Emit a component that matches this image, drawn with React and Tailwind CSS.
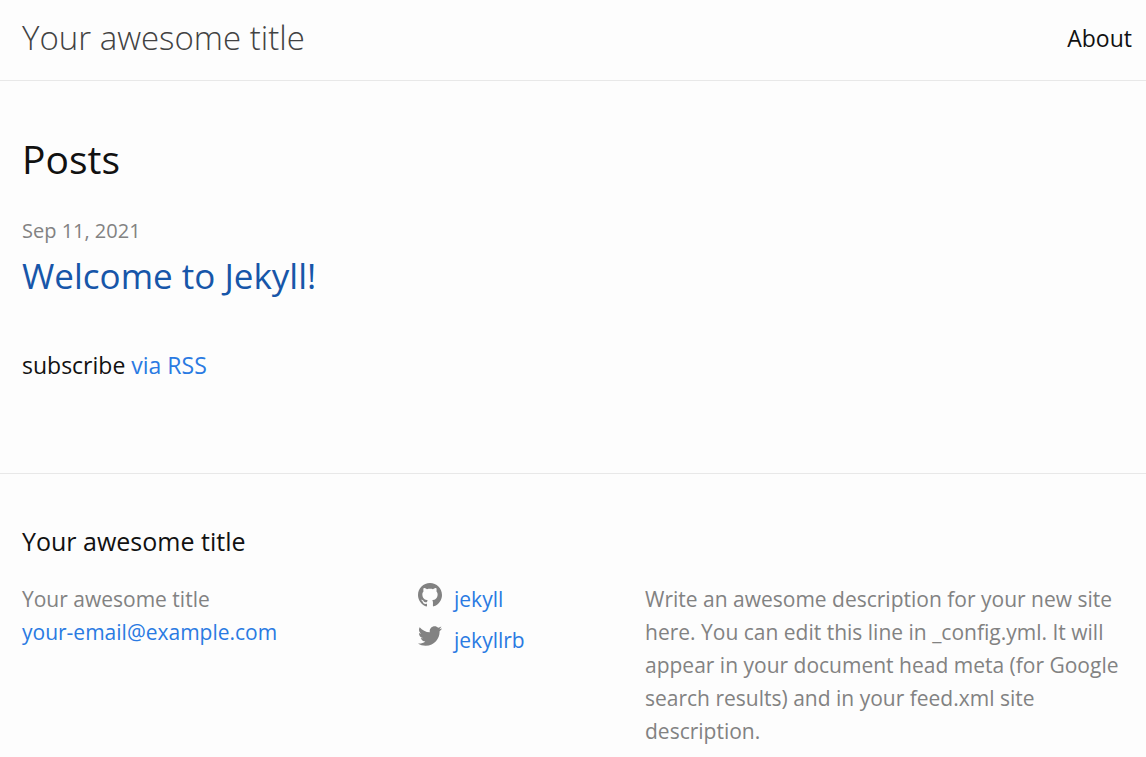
const GithubIcon = () => (
  <svg viewBox="0 0 16 16" className="h-6 w-6 fill-[#828282]" aria-hidden="true">
    <path fillRule="evenodd" d="M8 0C3.58 0 0 3.582 0 8c0 3.535 2.292 6.533 5.47 7.59.4.075.547-.172.547-.385 0-.19-.007-.693-.01-1.36-2.226.483-2.695-1.073-2.695-1.073-.364-.924-.89-1.17-.89-1.17-.725-.496.056-.486.056-.486.803.056 1.225.824 1.225.824.714 1.223 1.873.87 2.33.665.072-.517.278-.87.507-1.07-1.777-.2-3.644-.888-3.644-3.953 0-.873.31-1.587.823-2.147-.09-.202-.36-1.015.07-2.117 0 0 .67-.215 2.2.82.64-.178 1.32-.266 2-.27.68.004 1.36.092 2 .27 1.52-1.035 2.19-.82 2.19-.82.43 1.102.16 1.915.08 2.117.51.56.82 1.274.82 2.147 0 3.073-1.87 3.75-3.65 3.947.28.24.54.73.54 1.48 0 1.07-.01 1.93-.01 2.19 0 .21.14.46.55.38C13.71 14.53 16 11.53 16 8c0-4.418-3.582-8-8-8" />
  </svg>
);

const TwitterIcon = () => (
  <svg viewBox="0 0 16 16" className="h-6 w-6 fill-[#828282]" aria-hidden="true">
    <path d="M16 3.038c-.59.26-1.22.437-1.885.517.677-.407 1.198-1.05 1.443-1.816-.634.37-1.337.64-2.085.79-.598-.64-1.45-1.04-2.396-1.04-1.812 0-3.282 1.47-3.282 3.28 0 .26.03.51.085.75-2.728-.13-5.147-1.44-6.766-3.42C.83 2.58.67 3.14.67 3.75c0 1.14.58 2.143 1.46 2.732-.538-.017-1.045-.165-1.487-.41v.04c0 1.59 1.13 2.918 2.633 3.22-.276.074-.566.114-.865.114-.21 0-.41-.02-.61-.058.42 1.304 1.63 2.253 3.07 2.28-1.12.88-2.54 1.404-4.07 1.404-.26 0-.52-.015-.78-.045 1.46.93 3.18 1.474 5.04 1.474 6.04 0 9.34-5 9.34-9.33 0-.14 0-.28-.01-.42.64-.46 1.2-1.04 1.64-1.7z" />
  </svg>
);

const socials = [
  { name: "jekyll", href: "https://github.com/jekyll", Icon: GithubIcon },
  { name: "jekyllrb", href: "https://twitter.com/jekyllrb", Icon: TwitterIcon },
];

export default function App() {
  return (
    <div className="flex min-h-screen flex-col bg-[#fdfdfd] font-['Open_Sans','Noto_Sans',sans-serif] text-[23px] leading-9 text-[#111]">
      <header className="flex items-start justify-between border-b border-[#e8e8e8] pt-5 pr-[14px] pb-6 pl-[22px]">
        <a href="/" className="text-[33px] font-light text-[#424242]">Your awesome title</a>
        <nav>
          <a href="/about/">About</a>
        </nav>
      </header>

      <main className="grow px-[22px] pt-[54px] pb-20">
        <h1 className="text-[39px] leading-12">Posts</h1>
        <ul className="mt-8">
          <li>
            <time dateTime="2021-09-11" className="block text-[20px] leading-8 text-[#828282]">Sep 11, 2021</time>
            <h2 className="mt-1 text-[35px] leading-[50px]">
              <a href="/welcome-to-jekyll" className="text-[#1756a9]">Welcome to Jekyll!</a>
            </h2>
          </li>
        </ul>
        <p className="mt-[46px]">
          subscribe <a href="/feed.xml" className="text-[#2a7ae2]">via RSS</a>
        </p>
      </main>

      <footer className="border-t border-[#e8e8e8] px-[22px] pt-[49px] pb-[9px]">
        <h2 className="text-[25px]">Your awesome title</h2>
        <div className="mt-6 grid grid-cols-[396fr_227fr_479fr] text-[21px] leading-[33px] text-[#828282]">
          <div>
            <p>Your awesome title</p>
            <a href="mailto:your-email@example.com" className="text-[#2a7ae2]">your-email@example.com</a>
          </div>
          <ul className="flex flex-col gap-2">
            {socials.map(({ name, href, Icon }) => (
              <li key={name}>
                <a href={href} className="flex items-start gap-3 text-[#2a7ae2]">
                  <Icon />
                  <span>{name}</span>
                </a>
              </li>
            ))}
          </ul>
          <p>
            Write an awesome description for your new site here. You can edit this line in _config.yml. It will appear in your document head meta (for Google search results) and in your feed.xml site description.
          </p>
        </div>
      </footer>
    </div>
  );
}
